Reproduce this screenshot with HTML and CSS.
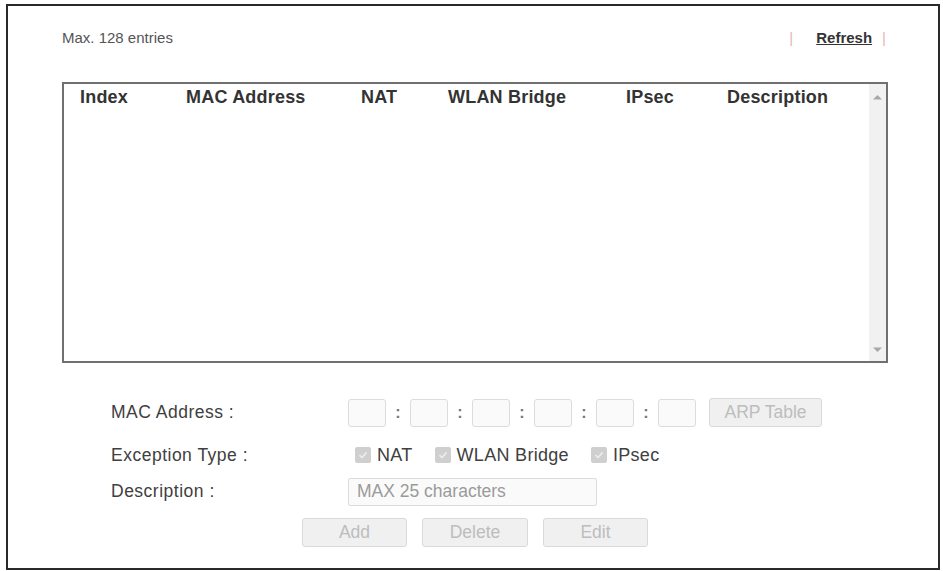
FILE: index.html
```html
<!DOCTYPE html>
<html lang="en">
<head>
<meta charset="utf-8">
<title>Exception List</title>
<link rel="stylesheet" href="styles.css">
</head>
<body>
<div class="frame">
  <div class="topbar">
    <span class="max">Max. 128 entries</span>
    <span class="links"><span class="pipe">|</span><a class="refresh" href="#">Refresh</a><span class="pipe">|</span></span>
  </div>

  <div class="list">
    <div class="cols">
      <div class="head">
        <span>Index</span>
        <span>MAC Address</span>
        <span>NAT</span>
        <span>WLAN Bridge</span>
        <span>IPsec</span>
        <span>Description</span>
      </div>
    </div>
    <div class="scroll">
      <svg class="arrow" width="9" height="6" viewBox="0 0 9 6"><path d="M0 5.5 L4.5 1 L9 5.5 Z" fill="#a8a8a8"/></svg>
      <svg class="arrow" width="9" height="6" viewBox="0 0 9 6"><path d="M0 0.5 L4.5 5 L9 0.5 Z" fill="#a8a8a8"/></svg>
    </div>
  </div>

  <div class="form">
    <div class="row row-mac">
      <span class="label">MAC Address :</span>
      <div class="field">
        <input class="oct" disabled><span class="colon">:</span>
        <input class="oct" disabled><span class="colon">:</span>
        <input class="oct" disabled><span class="colon">:</span>
        <input class="oct" disabled><span class="colon">:</span>
        <input class="oct" disabled><span class="colon">:</span>
        <input class="oct" disabled>
        <button class="btn arp" disabled>ARP Table</button>
      </div>
    </div>
    <div class="row row-type">
      <span class="label">Exception Type :</span>
      <div class="field">
        <span class="check first"><span class="box"><svg width="12" height="12" viewBox="0 0 12 12"><path d="M2.5 6.2 L5 8.6 L9.6 3.4" fill="none" stroke="#ececec" stroke-width="1.6"/></svg></span>NAT</span>
        <span class="check"><span class="box"><svg width="12" height="12" viewBox="0 0 12 12"><path d="M2.5 6.2 L5 8.6 L9.6 3.4" fill="none" stroke="#ececec" stroke-width="1.6"/></svg></span>WLAN Bridge</span>
        <span class="check"><span class="box"><svg width="12" height="12" viewBox="0 0 12 12"><path d="M2.5 6.2 L5 8.6 L9.6 3.4" fill="none" stroke="#ececec" stroke-width="1.6"/></svg></span>IPsec</span>
      </div>
    </div>
    <div class="row row-desc">
      <span class="label">Description :</span>
      <div class="field">
        <input class="desc" disabled placeholder="MAX 25 characters">
      </div>
    </div>
    <div class="actions">
      <button class="btn act" disabled>Add</button>
      <button class="btn act del" disabled>Delete</button>
      <button class="btn act" disabled>Edit</button>
    </div>
  </div>
</div>
</body>
</html>
```

FILE: styles.css
```css
html, body {
  margin: 0;
  padding: 0;
  background: #ffffff;
}

body {
  font-family: "Liberation Sans", Arial, sans-serif;
  color: #444;
}

.frame {
  box-sizing: border-box;
  margin: 4px 0 0 6px;
  width: 934px;
  height: 566px;
  border: 2px solid #2a2a2a;
  padding: 22px 0 0 54px;
}

.topbar {
  width: 826px;
  height: 20px;
  display: flex;
  justify-content: space-between;
  align-items: center;
  line-height: 20px;
}

.max {
  font-size: 15px;
  color: #555;
}

.links {
  display: flex;
  align-items: center;
  font-size: 15px;
  margin-right: 2px;
}

.pipe {
  color: #eab3bb;
  font-size: 15px;
}

.refresh {
  font-weight: bold;
  color: #333;
  text-decoration: underline;
  margin: 0 10px 0 23px;
}

.list {
  box-sizing: border-box;
  margin-top: 34px;
  width: 826px;
  height: 281px;
  border: 2px solid #707070;
  display: flex;
}

.cols {
  flex: 1;
}

.head {
  display: grid;
  grid-template-columns: 106px 175px 87px 178px 101px 1fr;
  padding: 3px 0 0 16px;
  font-size: 18px;
  line-height: 20px;
  font-weight: bold;
  color: #333;
  letter-spacing: 0.2px;
}

.scroll {
  width: 17px;
  background: #f1f1f1;
  display: flex;
  flex-direction: column;
  justify-content: space-between;
  align-items: center;
  padding: 10px 0 8px;
}

.arrow {
  display: block;
}

.form {
  margin-top: 35px;
  padding-left: 49px;
}

.row {
  display: flex;
  align-items: center;
}

.label {
  width: 237px;
  font-size: 17.5px;
  letter-spacing: 0.5px;
  color: #404040;
}

.field {
  display: flex;
  align-items: center;
}

.row-mac {
  height: 29px;
}

.row-type {
  height: 26px;
  margin-top: 15px;
}

.row-desc {
  height: 29px;
  margin-top: 9px;
}

.oct {
  box-sizing: border-box;
  width: 38px;
  height: 28px;
  margin: 0;
  border: 1px solid #dcdcdc;
  border-radius: 3px;
  background: #fafafa;
}

.colon {
  width: 24px;
  text-align: center;
  font-size: 16px;
  font-weight: bold;
  color: #777;
}

.btn {
  box-sizing: border-box;
  margin: 0;
  height: 29px;
  border: 1px solid #d9d9d9;
  border-radius: 3px;
  background: #f0f0f0;
  color: #bdbdbd;
  font-family: "Liberation Sans", Arial, sans-serif;
  font-size: 17.5px;
  padding: 0;
}

.arp {
  width: 113px;
  margin-left: 13px;
}

.check {
  display: flex;
  align-items: center;
  font-size: 18px;
  letter-spacing: 0.3px;
  color: #404040;
  margin-right: 22px;
}

.check.first {
  margin-left: 7px;
}

.box {
  width: 16px;
  height: 16px;
  border-radius: 2px;
  background: #cfcfcf;
  display: flex;
  align-items: center;
  justify-content: center;
  margin-right: 6px;
}

.box svg {
  display: block;
}

.desc {
  box-sizing: border-box;
  width: 249px;
  height: 28px;
  margin: 0;
  padding: 0 8px;
  border: 1px solid #dcdcdc;
  border-radius: 2px;
  background: #fafafa;
  font-family: "Liberation Sans", Arial, sans-serif;
  font-size: 17.5px;
}

.desc::placeholder {
  color: #9a9a9a;
  opacity: 1;
}

.actions {
  display: flex;
  justify-content: center;
  gap: 15px;
  margin: 12px 0 0 -49px;
  width: 826px;
}

.act {
  width: 105px;
}

.act.del {
  width: 106px;
}
```
